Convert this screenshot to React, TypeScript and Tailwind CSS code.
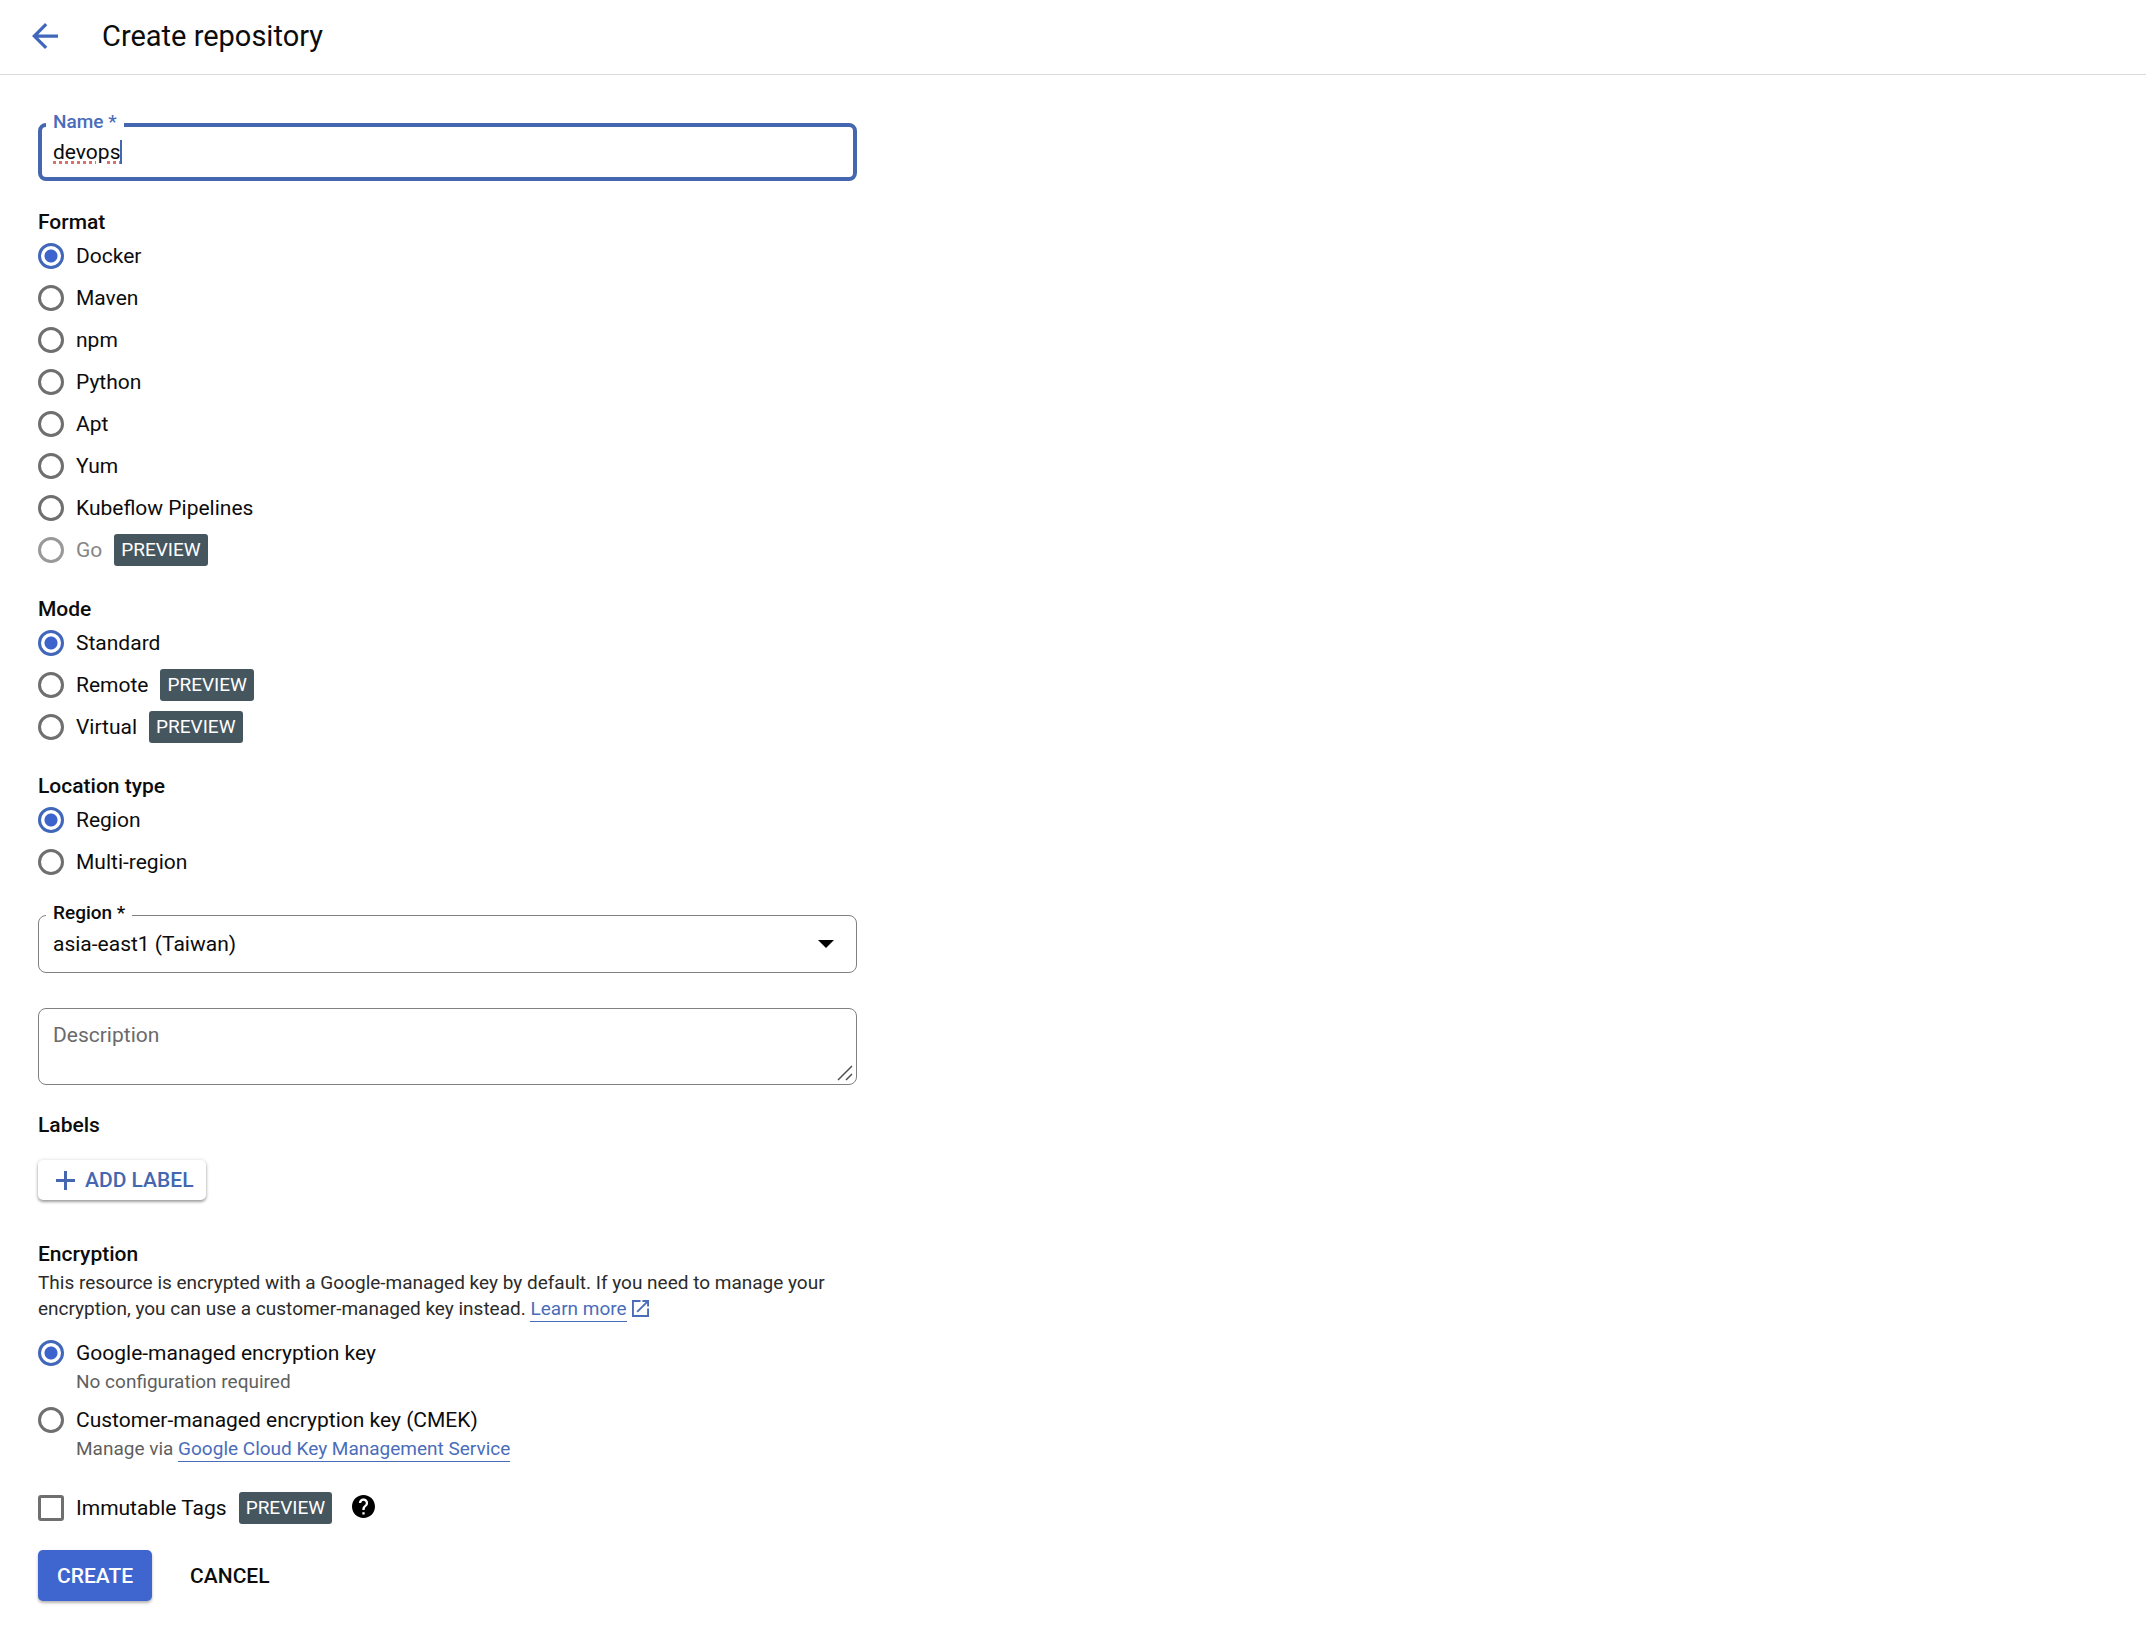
import React, { useState } from 'react';

interface IOption {
  value: string;
  preview?: boolean;
  disabled?: boolean;
}

interface IRadioGroup {
  title: string;
  name: string;
  options: IOption[];
}

const groups: IRadioGroup[] = [
  {
    title: 'Format',
    name: 'format',
    options: [
      { value: 'Docker' },
      { value: 'Maven' },
      { value: 'npm' },
      { value: 'Python' },
      { value: 'Apt' },
      { value: 'Yum' },
      { value: 'Kubeflow Pipelines' },
      { value: 'Go', preview: true, disabled: true },
    ],
  },
  {
    title: 'Mode',
    name: 'mode',
    options: [
      { value: 'Standard' },
      { value: 'Remote', preview: true },
      { value: 'Virtual', preview: true },
    ],
  },
  {
    title: 'Location type',
    name: 'location',
    options: [{ value: 'Region' }, { value: 'Multi-region' }],
  },
];

const radioClass =
  'size-[26px] shrink-0 appearance-none rounded-full border-3 border-[#6f6f6f] outline-none checked:border-[#4167ba] checked:bg-[radial-gradient(circle,#3c64cc_6px,transparent_7px)] disabled:border-[#999999]';

const Preview: React.FC = () => (
  <span className="ml-3 flex h-8 items-center rounded-[3px] bg-[#46565f] px-[7px] text-[19px] text-white">PREVIEW</span>
);

const RadioGroup: React.FC<{ group: IRadioGroup }> = ({ group }) => {
  const [selected, setSelected] = useState(group.options[0].value);

  return (
    <fieldset>
      <legend className="mb-[6px] font-medium">{group.title}</legend>
      <div className="flex flex-col gap-[10px]">
        {group.options.map(option => (
          <label key={option.value} className="flex h-8 items-center">
            <input
              type="radio"
              name={group.name}
              checked={selected === option.value}
              disabled={option.disabled}
              onChange={() => setSelected(option.value)}
              className={radioClass}
            />
            <span className={option.disabled ? 'ml-3 text-[#868686]' : 'ml-3'}>{option.value}</span>
            {option.preview && <Preview />}
          </label>
        ))}
      </div>
    </fieldset>
  );
};

const App: React.FC = () => {
  const [name, setName] = useState('devops');
  const [keyType, setKeyType] = useState('google');

  return (
    <div className="min-h-screen bg-white font-[Roboto,sans-serif] text-[21px] leading-6 text-[#0c0c0c]">
      <header className="flex h-[75px] items-center border-b border-[#dadada] px-8 pb-[3px]">
        <button type="button" aria-label="Back" className="text-[#4167ba]">
          <svg width="26" height="26" viewBox="4 4 16 16" fill="currentColor">
            <path d="M20 11H7.83l5.59-5.59L12 4l-8 8 8 8 1.41-1.41L7.83 13H20v-2z" />
          </svg>
        </button>
        <h1 className="ml-11 text-[29px] leading-8">Create repository</h1>
      </header>

      <form className="w-full max-w-[895px] px-[38px] pt-12 pb-7" onSubmit={e => e.preventDefault()}>
        <div className="relative flex h-[58px] items-center rounded-lg border-4 border-[#4467af] px-[11px]">
          <label htmlFor="name" className="absolute -top-[15px] left-1 bg-white px-[7px] text-[19px] leading-5 font-medium text-[#4a6dba]">
            Name *
          </label>
          <input
            id="name"
            type="text"
            value={name}
            spellCheck={false}
            onChange={e => setName(e.target.value)}
            className="field-sizing-content underline decoration-[#d9706b] decoration-dotted decoration-3 outline-none"
          />
          <span className="h-6 w-[2px] bg-[#4467af]" />
        </div>

        <div className="mt-[29px] flex flex-col gap-[31px]">
          {groups.map(group => (
            <RadioGroup key={group.name} group={group} />
          ))}
        </div>

        <div className="relative mt-[37px] flex h-[58px] items-center rounded-lg border border-[#808080]">
          <label htmlFor="region" className="absolute -top-[13px] left-[7px] bg-white px-[7px] text-[19px] leading-5 font-medium">
            Region *
          </label>
          <select id="region" className="h-8 w-full appearance-none px-[14px] outline-none">
            <option>asia-east1 (Taiwan)</option>
          </select>
          <svg className="pointer-events-none absolute top-6 right-[22px]" width="16" height="8" viewBox="0 0 16 8">
            <path d="M0 0h16L8 8z" fill="#000" />
          </svg>
        </div>

        <div className="relative mt-[35px] flex">
          <textarea
            aria-label="Description"
            placeholder="Description"
            className="h-[77px] w-full resize-none rounded-lg border border-[#808080] px-[14px] py-[14px] outline-none placeholder:text-[#6a6a6a]"
          />
          <svg className="pointer-events-none absolute right-1 bottom-1" width="16" height="16" viewBox="0 0 16 16" stroke="#505050" strokeWidth="1.5">
            <path d="M1 15L15 1M9 15l6-6" />
          </svg>
        </div>

        <h2 className="mt-7 font-medium">Labels</h2>
        <button
          type="button"
          className="mt-[23px] flex h-10 items-center rounded-[5px] pr-3 pl-[18px] font-medium text-[#4467af] shadow-[0_2px_3px_rgba(0,0,0,0.35),0_0_4px_rgba(0,0,0,0.12)]"
        >
          <svg className="mr-[10px]" width="19" height="19" viewBox="0 0 19 19" fill="currentColor">
            <path d="M8 0h3v8h8v3h-8v8H8v-8H0V8h8z" />
          </svg>
          ADD LABEL
        </button>

        <h2 className="mt-[42px] font-medium">Encryption</h2>
        <p className="mt-1 text-[19px] leading-[26px] text-[#2b2b2b]">
          This resource is encrypted with a Google-managed key by default. If you need to manage your encryption, you can use a
          customer-managed key instead.{' '}
          <a href="#learn-more" className="whitespace-nowrap text-[#4a6dba]">
            <span className="border-b border-[#4a6dba] pb-px">Learn more</span>
            <svg className="ml-[5px] inline-block align-[-2px]" width="17" height="17" viewBox="3 3 18 18" fill="currentColor">
              <path d="M19 19H5V5h7V3H3v18h18v-9h-2v7zM14 3v2h3.59l-9.83 9.83 1.41 1.41L19 6.41V10h2V3h-7z" />
            </svg>
          </a>
        </p>

        <div className="mt-[15px] flex flex-col gap-[9px]">
          <div>
            <label className="flex h-8 items-center gap-3">
              <input
                type="radio"
                name="key"
                checked={keyType === 'google'}
                onChange={() => setKeyType('google')}
                className={radioClass}
              />
              Google-managed encryption key
            </label>
            <p className="pl-[38px] text-[19px] leading-[26px] text-[#5f5f5f]">No configuration required</p>
          </div>
          <div>
            <label className="flex h-8 items-center gap-3">
              <input
                type="radio"
                name="key"
                checked={keyType === 'customer'}
                onChange={() => setKeyType('customer')}
                className={radioClass}
              />
              Customer-managed encryption key (CMEK)
            </label>
            <p className="pl-[38px] text-[19px] leading-[26px] text-[#5f5f5f]">
              Manage via{' '}
              <a href="#kms" className="border-b border-[#4a6dba] pb-px text-[#4a6dba]">
                Google Cloud Key Management Service
              </a>
            </p>
          </div>
        </div>

        <div className="mt-[30px] flex h-8 items-center">
          <label className="flex items-center">
            <input
              type="checkbox"
              className="size-[26px] appearance-none rounded-[3px] border-3 border-[#6f6f6f] outline-none checked:bg-[#4167ba]"
            />
            <span className="ml-3">Immutable Tags</span>
            <Preview />
          </label>
          <button type="button" aria-label="Help" className="ml-5 pb-1">
            <svg width="23" height="23" viewBox="2 2 20 20" fill="#000">
              <path d="M12 2C6.48 2 2 6.48 2 12s4.48 10 10 10 10-4.48 10-10S17.52 2 12 2zm1 17h-2v-2h2v2zm2.07-7.75l-.9.92C13.45 12.9 13 13.5 13 15h-2v-.5c0-1.1.45-2.1 1.17-2.83l1.24-1.26c.37-.36.59-.86.59-1.41 0-1.1-.9-2-2-2s-2 .9-2 2H8c0-2.21 1.79-4 4-4s4 1.79 4 4c0 .88-.36 1.68-.93 2.25z" />
            </svg>
          </button>
        </div>

        <div className="mt-[26px] flex h-[51px] gap-[38px]">
          <button
            type="submit"
            className="rounded-[5px] bg-[#3f66cf] px-[19px] font-medium text-white shadow-[0_2px_3px_rgba(0,0,0,0.3)]"
          >
            CREATE
          </button>
          <button type="button" className="font-medium">
            CANCEL
          </button>
        </div>
      </form>
    </div>
  );
};

export default App;
